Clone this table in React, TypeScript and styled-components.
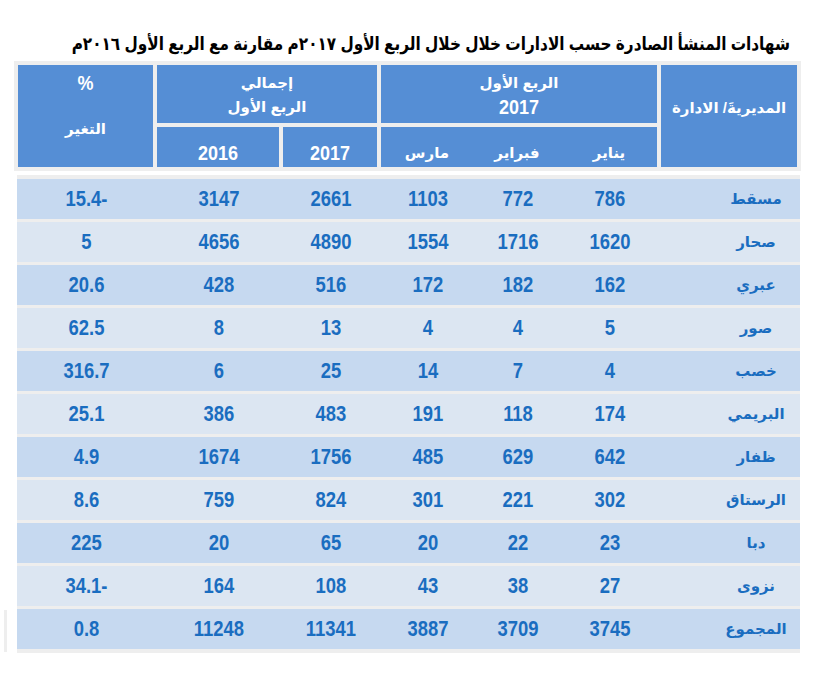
import React from "react";
import styled, { createGlobalStyle } from "styled-components";

const Global = createGlobalStyle`
  html, body { margin: 0; padding: 0; background: #ffffff; }
  body { font-family: "Liberation Sans", "DejaVu Sans", sans-serif; }
`;

const NUM_FONT = `"Liberation Sans", "DejaVu Sans", sans-serif`;
const AR_FONT = `"Liberation Sans", "DejaVu Sans", sans-serif`;

const Page = styled.div`
  width: 816px;
  height: 675px;
  position: relative;
  direction: rtl;
  box-sizing: border-box;
  padding-top: 31px;
`;

const Title = styled.h1`
  margin: 0 26px 0 0;
  font-family: ${AR_FONT};
  font-weight: 700;
  font-size: 18px;
  line-height: 26px;
  height: 26px;
  color: #000;
  text-align: right;
  white-space: nowrap;
  transform: scaleX(0.85);
  transform-origin: right center;
`;

const HeaderFrame = styled.div`
  margin: 4px 15px 0 0;
  width: 779px;
  padding: 4px;
  background: #eeeeee;
  display: grid;
  grid-template-columns: 136px 276px 94px 122px 135px;
  grid-template-rows: 58px 40px;
  gap: 4px;
`;

const HCell = styled.div<{ $col: string; $row: string; $pad?: string; $align?: string }>`
  grid-column: ${(p) => p.$col};
  grid-row: ${(p) => p.$row};
  background: #558ed5;
  color: #fff;
  font-family: ${AR_FONT};
  font-weight: 700;
  font-size: 15px;
  display: flex;
  flex-direction: column;
  align-items: center;
  justify-content: ${(p) => p.$align ?? "center"};
  padding: ${(p) => p.$pad ?? "0"};
  box-sizing: border-box;
  line-height: 24px;
`;

const HNum = styled.span`
  font-family: ${NUM_FONT};
  font-size: 18px;
  font-weight: 700;
  display: inline-block;
  transform: scaleY(1.1);
`;

const HGap = styled.span`
  height: 22px;
`;

const MonthRow = styled.div`
  width: 100%;
  display: flex;
  gap: 4px;
`;

const Month = styled.span<{ $w: number }>`
  width: ${(p) => p.$w}px;
  text-align: center;
`;

const Body = styled.div`
  margin: 4px 16px 0 0;
  width: 783px;
  padding: 4px 0;
  background: #eeeeee;
  display: flex;
  flex-direction: column;
  gap: 3px;
`;

const Row = styled.div<{ $dark: boolean }>`
  height: 40px;
  padding: 0 2px 0 1px;
  background: ${(p) => (p.$dark ? "#c6d9f0" : "#dce6f2")};
  display: grid;
  grid-template-columns: 136px 96px 80px 92px 94px 122px 135px;
  column-gap: 4px;
  align-items: center;
  color: #1a6dc0;
`;

const Name = styled.div`
  font-family: ${AR_FONT};
  font-weight: 700;
  font-size: 15px;
  text-align: center;
  padding-left: 52px;
`;

const Num = styled.div`
  font-family: ${NUM_FONT};
  font-weight: 700;
  font-size: 19px;
  text-align: center;
  direction: ltr;
  transform: scale(0.97, 1.12);
`;

const Stray = styled.div`
  position: absolute;
  left: 4px;
  top: 610px;
  width: 3px;
  height: 42px;
  background: #eeeeee;
`;

type R = [string, string, string, string, string, string, string];

const rows: R[] = [
  ["مسقط", "786", "772", "1103", "2661", "3147", "15.4-"],
  ["صحار", "1620", "1716", "1554", "4890", "4656", "5"],
  ["عبري", "162", "182", "172", "516", "428", "20.6"],
  ["صور", "5", "4", "4", "13", "8", "62.5"],
  ["خصب", "4", "7", "14", "25", "6", "316.7"],
  ["البريمي", "174", "118", "191", "483", "386", "25.1"],
  ["ظفار", "642", "629", "485", "1756", "1674", "4.9"],
  ["الرستاق", "302", "221", "301", "824", "759", "8.6"],
  ["دبا", "23", "22", "20", "65", "20", "225"],
  ["نزوى", "27", "38", "43", "108", "164", "34.1-"],
  ["المجموع", "3745", "3709", "3887", "11341", "11248", "0.8"],
];

export default function App() {
  return (
    <Page>
      <Global />
      <Title>
        شهادات المنشأ الصادرة حسب الادارات خلال خلال الربع الأول ٢٠١٧م مقارنة مع الربع الأول ٢٠١٦م
      </Title>
      <HeaderFrame>
        <HCell $col="1" $row="1 / 3" $pad="0 0 16px 0">
          المديريةَ/ الادارة
        </HCell>
        <HCell $col="2" $row="1" $align="flex-start" $pad="6px 0 0 0">
          <span>الربع الأول</span>
          <HNum>2017</HNum>
        </HCell>
        <HCell $col="2" $row="2" $align="flex-end" $pad="0 0 2px 0">
          <MonthRow>
            <Month $w={96}>يناير</Month>
            <Month $w={80}>فبراير</Month>
            <Month $w={92}>مارس</Month>
          </MonthRow>
        </HCell>
        <HCell $col="3 / 5" $row="1" $align="flex-start" $pad="6px 0 0 0">
          <span>إجمالي</span>
          <span>الربع الأول</span>
        </HCell>
        <HCell $col="3" $row="2" $align="flex-end" $pad="0 0 2px 0">
          <HNum>2017</HNum>
        </HCell>
        <HCell $col="4" $row="2" $align="flex-end" $pad="0 0 2px 0">
          <HNum>2016</HNum>
        </HCell>
        <HCell $col="5" $row="1 / 3" $align="flex-start" $pad="6px 0 0 0">
          <HNum>%</HNum>
          <HGap />
          <span>التغير</span>
        </HCell>
      </HeaderFrame>
      <Body>
        {rows.map((r, i) => (
          <Row key={r[0]} $dark={i % 2 === 0}>
            <Name>{r[0]}</Name>
            {r.slice(1).map((v, j) => (
              <Num key={j}>{v}</Num>
            ))}
          </Row>
        ))}
      </Body>
      <Stray />
    </Page>
  );
}
